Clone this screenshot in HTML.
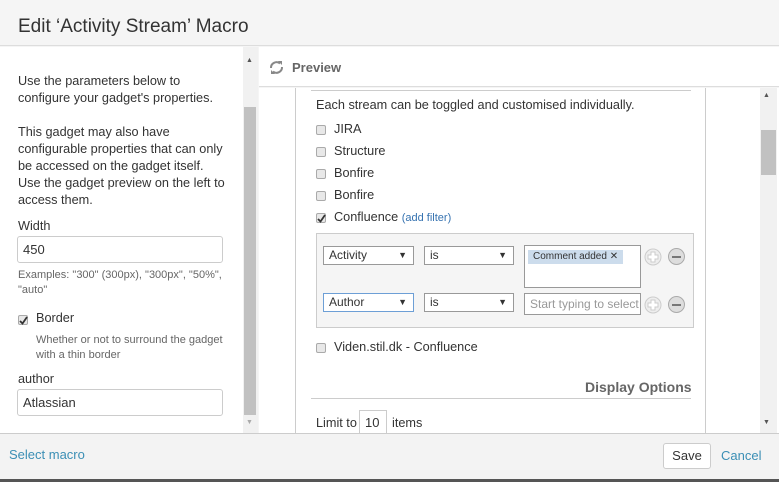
<!DOCTYPE html>
<html><head><meta charset="utf-8"><style>
*{box-sizing:border-box;margin:0;padding:0}
body{width:779px;height:482px;overflow:hidden;background:#f5f5f5;font-family:"Liberation Sans",Arial,sans-serif;color:#333;position:relative}
.a{position:absolute}
.t{font-size:12.7px;line-height:17px}
.cb{position:absolute;width:10px;height:10px;border:1px solid #aaa;border-radius:2px;background:#e8e8e8}
.ck{position:absolute}
.sel{position:absolute;height:19px;border:1px solid #999;background:#fff;font-size:12px;line-height:17px;padding-left:5px}
.sel:after{content:"▼";position:absolute;right:6px;top:0;font-size:9px}
.inp{position:absolute;border:1px solid #ccc;border-radius:3px;background:#fff;font-size:13px;padding-left:5px}
.circ{position:absolute;width:17px;height:17px;border-radius:50%;border:1px solid #aaa}
</style></head><body>
<div class="a" style="left:0;top:0;width:779px;height:46px;background:#f5f5f5;border-bottom:1px solid #ddd"></div>
<div class="a" style="left:18px;top:16px;font-size:19px;color:#333">Edit ‘Activity Stream’ Macro</div>

<!-- left panel -->
<div class="a" style="left:0;top:47px;width:258px;height:386px;background:#fff;border-right:1px solid #ccc"></div>
<div class="a" style="left:243px;top:47px;width:15px;height:386px;background:#f1f1f1"></div>
<div class="a" style="left:244px;top:107px;width:12px;height:308px;background:#c1c1c1"></div>
<div class="a" style="left:246px;top:57px;font-size:7px;color:#555">▲</div>
<div class="a" style="left:246px;top:419px;font-size:7px;color:#aaa">▼</div>
<div class="a t" style="left:18px;top:73px;width:205px">Use the parameters below to configure your gadget's properties.</div>
<div class="a t" style="left:18px;top:124px;width:210px">This gadget may also have configurable properties that can only be accessed on the gadget itself. Use the gadget preview on the left to access them.</div>
<div class="a t" style="left:18px;top:218px">Width</div>
<div class="inp" style="left:17px;top:236px;width:206px;height:27px;line-height:25px">450</div>
<div class="a" style="left:18px;top:268px;font-size:11px;line-height:15px;color:#666;width:215px">Examples: "300" (300px), "300px", "50%", "auto"</div>
<div class="cb" style="left:18px;top:315px"></div>
<svg class="ck" style="left:19px;top:316px" width="9" height="9"><path d="M1 5l2.5 2.5L8 1" stroke="#333" stroke-width="1.8" fill="none"/></svg>
<div class="a t" style="left:36px;top:310px">Border</div>
<div class="a" style="left:36px;top:333px;font-size:11px;line-height:15px;color:#666;width:195px">Whether or not to surround the gadget with a thin border</div>
<div class="a t" style="left:18px;top:371px">author</div>
<div class="inp" style="left:17px;top:389px;width:206px;height:27px;line-height:25px">Atlassian</div>

<!-- right panel -->
<div class="a" style="left:259px;top:47px;width:520px;height:40px;background:#fff;border-bottom:1px solid #ddd"></div>
<svg class="a" style="left:268px;top:59px" width="17" height="17" viewBox="0 0 17 17"><path d="M3 9a5.5 5.5 0 0 1 9-4.5M14 8a5.5 5.5 0 0 1-9 4.5" stroke="#888" stroke-width="2" fill="none"/><path d="M10 2h4v4zM7 15H3v-4z" fill="#888"/></svg>
<div class="a" style="left:292px;top:60px;font-size:13px;font-weight:bold;color:#666">Preview</div>
<div class="a" style="left:259px;top:88px;width:520px;height:345px;background:#fff"></div>
<div class="a" style="left:295px;top:88px;width:1px;height:345px;background:#ccc"></div>
<div class="a" style="left:705px;top:88px;width:1px;height:345px;background:#ccc"></div>
<div class="a" style="left:760px;top:88px;width:17px;height:345px;background:#f1f1f1"></div>
<div class="a" style="left:761px;top:130px;width:15px;height:45px;background:#c1c1c1"></div>
<div class="a" style="left:763px;top:92px;font-size:7px;color:#555">▲</div>
<div class="a" style="left:763px;top:419px;font-size:7px;color:#555">▼</div>
<div class="a" style="left:311px;top:90px;width:380px;height:1px;background:#ccc"></div>
<div class="a t" style="left:316px;top:97px">Each stream can be toggled and customised individually.</div>
<div class="cb" style="left:316px;top:125px"></div><div class="a t" style="left:334px;top:121px">JIRA</div>
<div class="cb" style="left:316px;top:147px"></div><div class="a t" style="left:334px;top:143px">Structure</div>
<div class="cb" style="left:316px;top:169px"></div><div class="a t" style="left:334px;top:165px">Bonfire</div>
<div class="cb" style="left:316px;top:191px"></div><div class="a t" style="left:334px;top:187px">Bonfire</div>
<div class="cb" style="left:316px;top:213px"></div>
<svg class="ck" style="left:317px;top:214px" width="9" height="9"><path d="M1 5l2.5 2.5L8 1" stroke="#333" stroke-width="1.8" fill="none"/></svg>
<div class="a t" style="left:334px;top:209px">Confluence <span style="font-size:11px;color:#3572b0">(add filter)</span></div>
<div class="a" style="left:316px;top:233px;width:378px;height:95px;border:1px solid #ccc;background:#f5f5f5"></div>
<div class="sel" style="left:323px;top:246px;width:91px">Activity</div>
<div class="sel" style="left:424px;top:246px;width:90px">is</div>
<div class="a" style="left:524px;top:245px;width:117px;height:43px;border:1px solid #999;background:#fff"></div>
<div class="a" style="left:528px;top:250px;height:14px;padding:0 5px;background:#ccdcec;font-size:10px;line-height:14px;color:#333">Comment added ✕</div>
<div class="sel" style="left:323px;top:293px;width:91px;border-color:#6d9fd6">Author</div>
<div class="sel" style="left:424px;top:293px;width:90px">is</div>
<div class="a" style="left:524px;top:293px;width:117px;height:22px;border:1px solid #999;background:#fff;font-size:12px;line-height:20px;color:#999;padding-left:5px;overflow:hidden;white-space:nowrap">Start typing to select a</div>
<svg class="a" style="left:644px;top:248px" width="18" height="18"><circle cx="9" cy="9" r="8" fill="#eee" stroke="#ccc"/><path d="M7 4h4v3h3v4h-3v3H7v-3H4V7h3z" fill="#fff" stroke="#ccc"/></svg>
<div class="circ" style="left:668px;top:248px;background:#ddd"></div>
<div class="a" style="left:672px;top:256px;width:9px;height:2px;background:#777"></div>
<svg class="a" style="left:644px;top:296px" width="18" height="18"><circle cx="9" cy="9" r="8" fill="#eee" stroke="#ccc"/><path d="M7 4h4v3h3v4h-3v3H7v-3H4V7h3z" fill="#fff" stroke="#ccc"/></svg>
<div class="circ" style="left:668px;top:296px;background:#ddd"></div>
<div class="a" style="left:672px;top:304px;width:9px;height:2px;background:#777"></div>
<div class="cb" style="left:316px;top:343px"></div><div class="a t" style="left:334px;top:339px">Viden.stil.dk - Confluence</div>
<div class="a" style="left:585px;top:379px;font-size:14px;font-weight:bold;color:#666">Display Options</div>
<div class="a" style="left:311px;top:398px;width:380px;height:1px;background:#ccc"></div>
<div class="a t" style="left:316px;top:415px">Limit to</div>
<div class="a" style="left:359px;top:410px;width:28px;height:23px;border:1px solid #ccc;border-bottom:none;font-size:13px;line-height:24px;padding-left:5px">10</div>
<div class="a t" style="left:392px;top:415px">items</div>

<!-- footer -->
<div class="a" style="left:0;top:433px;width:779px;height:47px;background:#f3f3f3;border-top:1px solid #ccc"></div>
<div class="a" style="left:0;top:479px;width:779px;height:3px;background:#555"></div>
<div class="a" style="left:9px;top:447px;font-size:13px;color:#3b8fb5">Select macro</div>
<div class="a" style="left:663px;top:443px;width:48px;height:26px;background:#fff;border:1px solid #ccc;border-radius:3px;font-size:13px;line-height:24px;text-align:center">Save</div>
<div class="a" style="left:721px;top:448px;font-size:13px;color:#3b8fb5">Cancel</div>
</body></html>
